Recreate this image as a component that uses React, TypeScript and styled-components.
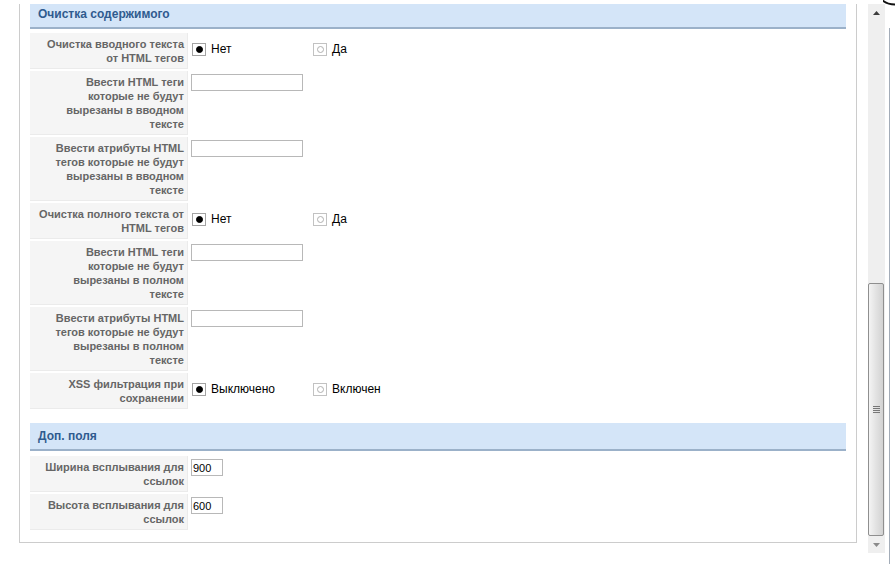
import React from 'react';
import styled, { createGlobalStyle } from 'styled-components';

const Global = createGlobalStyle`
  html, body { margin: 0; padding: 0; background: #fff; }
  body { font-family: "Liberation Sans", Arial, sans-serif; font-size: 11px; color: #000; }
  * { box-sizing: border-box; }
`;

const Screen = styled.div`
  position: relative;
  width: 895px;
  height: 564px;
  overflow: hidden;
  background: #fff;
  display: flex;
  align-items: flex-start;
`;

const Frame = styled.div`
  margin-top: 4px;
  width: 885px;
  height: 549px;
  display: flex;
  overflow: hidden;
`;

const Viewport = styled.div`
  flex: 1;
  overflow: hidden;
  padding: 0 11px 0 19px;
`;

const Panel = styled.div`
  margin-top: -3px;
  border: 1px solid #cccccc;
  border-top: none;
  padding: 0 10px 12px;
`;

const SectionHeader = styled.div<{ $gap?: number }>`
  margin-top: ${(p) => p.$gap ?? 0}px;
  height: 28px;
  background: #d4e5f8;
  border-bottom: 2px solid #9bb1c9;
  padding-left: 8px;
  font-weight: bold;
  font-size: 12px;
  line-height: 26px;
  color: #2f5b8f;
`;

const FormGrid = styled.div<{ $gap: number }>`
  margin-top: ${(p) => p.$gap}px;
  display: grid;
  grid-template-columns: 158px 1fr;
  column-gap: 2px;
  row-gap: 2px;
`;

const KeyCell = styled.div`
  background: #f5f5f5;
  border-bottom: 1px solid #ebebeb;
  border-right: 1px solid #ebebeb;
  padding: 4px 3px 3px 0;
  text-align: right;
  font-weight: bold;
  font-size: 11px;
  line-height: 14px;
  color: #666666;
  white-space: nowrap;
`;

const ValueCell = styled.div`
  padding: 3px 0 0 1px;
`;

const RadioGroup = styled.div`
  display: flex;
  margin-top: 6px;
`;

const RadioOption = styled.label`
  width: 121px;
  display: inline-flex;
  align-items: center;
  gap: 5px;
  font-size: 12px;
  color: #000;
`;

const RadioBox = styled.span<{ $checked: boolean }>`
  margin-left: 1px;
  width: 14px;
  height: 13px;
  border: 1px solid ${(p) => (p.$checked ? '#a3a3a3' : '#c2c2c2')};
  background: #fff;
  display: inline-flex;
  align-items: center;
  justify-content: center;
`;

const Dot = styled.span<{ $checked: boolean }>`
  width: 7px;
  height: 7px;
  border-radius: 50%;
  background: ${(p) => (p.$checked ? '#000' : '#fff')};
  border: 1px solid ${(p) => (p.$checked ? '#000' : '#b0b0b0')};
`;

const TextInput = styled.input<{ $w: number }>`
  display: block;
  width: ${(p) => p.$w}px;
  height: 17px;
  margin: 0;
  border: 1px solid #b8b8b8;
  padding: 0 1px;
  font-family: "Liberation Sans", Arial, sans-serif;
  font-size: 11px;
  color: #000;
  background: #fff;
  outline: none;
`;

const Scrollbar = styled.div`
  width: 17px;
  height: 100%;
  background: #efefef;
  display: flex;
  flex-direction: column;
`;

const ArrowButton = styled.div`
  height: 17px;
  display: flex;
  align-items: center;
  justify-content: center;
`;

const Track = styled.div`
  flex: 1;
  display: flex;
  flex-direction: column;
  justify-content: flex-end;
  padding: 0 1px 0 0;
`;

const Thumb = styled.div`
  height: 253px;
  border: 1px solid #8f8f8f;
  border-radius: 2px;
  background: linear-gradient(to right, #f4f4f4 0%, #e4e4e4 45%, #d2d2d2 100%);
  display: flex;
  align-items: center;
  justify-content: center;
`;

const Decor = styled.svg`
  position: absolute;
  right: 0;
  top: 0;
  pointer-events: none;
`;

type Row =
  | { label: string[]; kind: 'radio'; options: [string, string] }
  | { label: string[]; kind: 'input'; width: number; value?: string };

const section1: Row[] = [
  { label: ['Очистка вводного текста', 'от HTML тегов'], kind: 'radio', options: ['Нет', 'Да'] },
  { label: ['Ввести HTML теги', 'которые не будут', 'вырезаны в вводном', 'тексте'], kind: 'input', width: 112 },
  { label: ['Ввести атрибуты HTML', 'тегов которые не будут', 'вырезаны в вводном', 'тексте'], kind: 'input', width: 112 },
  { label: ['Очистка полного текста от', 'HTML тегов'], kind: 'radio', options: ['Нет', 'Да'] },
  { label: ['Ввести HTML теги', 'которые не будут', 'вырезаны в полном', 'тексте'], kind: 'input', width: 112 },
  { label: ['Ввести атрибуты HTML', 'тегов которые не будут', 'вырезаны в полном', 'тексте'], kind: 'input', width: 112 },
  { label: ['XSS фильтрация при', 'сохранении'], kind: 'radio', options: ['Выключено', 'Включен'] },
];

const section2: Row[] = [
  { label: ['Ширина всплывания для', 'ссылок'], kind: 'input', width: 32, value: '900' },
  { label: ['Высота всплывания для', 'ссылок'], kind: 'input', width: 32, value: '600' },
];

const Label: React.FC<{ lines: string[] }> = ({ lines }) => (
  <KeyCell>
    {lines.map((l, i) => (
      <React.Fragment key={i}>
        {i > 0 && <br />}
        {l}
      </React.Fragment>
    ))}
  </KeyCell>
);

const Radio: React.FC<{ text: string; checked: boolean }> = ({ text, checked }) => (
  <RadioOption>
    <RadioBox $checked={checked}>
      <Dot $checked={checked} />
    </RadioBox>
    {text}
  </RadioOption>
);

const Rows: React.FC<{ rows: Row[]; gap: number }> = ({ rows, gap }) => (
  <FormGrid $gap={gap}>
    {rows.map((r, i) => (
      <React.Fragment key={i}>
        <Label lines={r.label} />
        <ValueCell>
          {r.kind === 'radio' ? (
            <RadioGroup>
              <Radio text={r.options[0]} checked />
              <Radio text={r.options[1]} checked={false} />
            </RadioGroup>
          ) : (
            <TextInput $w={r.width} defaultValue={r.value ?? ''} />
          )}
        </ValueCell>
      </React.Fragment>
    ))}
  </FormGrid>
);

export default function App() {
  return (
    <>
      <Global />
      <Screen>
        <Frame>
          <Viewport>
            <Panel>
              <SectionHeader>Очистка содержимого</SectionHeader>
              <Rows rows={section1} gap={4} />
              <SectionHeader $gap={14}>Доп. поля</SectionHeader>
              <Rows rows={section2} gap={5} />
            </Panel>
          </Viewport>
          <Scrollbar>
            <ArrowButton>
              <svg width="7" height="4" viewBox="0 0 7 4">
                <path d="M0 4 L3.5 0 L7 4 Z" fill="#3c3c3c" />
              </svg>
            </ArrowButton>
            <Track>
              <Thumb>
                <svg width="7" height="8" viewBox="0 0 7 8">
                  <path d="M0 0.5 H7 M0 2.5 H7 M0 4.5 H7 M0 6.5 H7" stroke="#777" strokeWidth="1" />
                </svg>
              </Thumb>
            </Track>
            <ArrowButton>
              <svg width="7" height="4" viewBox="0 0 7 4">
                <path d="M0 0 L3.5 4 L7 0 Z" fill="#8a8a8a" />
              </svg>
            </ArrowButton>
          </Scrollbar>
        </Frame>
        <Decor width="12" height="564" viewBox="0 0 12 564">
          <path d="M-1 0 Q4 4.5 12 4.5" stroke="#111" strokeWidth="2" fill="none" />
          <line x1="6.5" y1="28" x2="6.5" y2="564" stroke="#a3acb8" strokeWidth="1" />
        </Decor>
      </Screen>
    </>
  );
}
